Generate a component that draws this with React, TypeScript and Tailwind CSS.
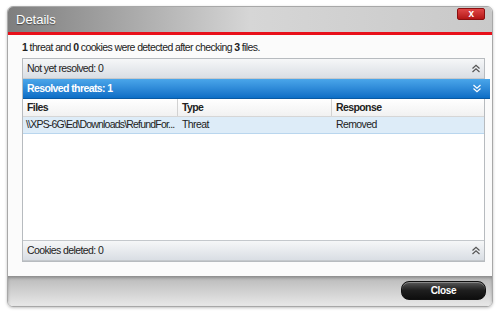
import React from 'react';

function Chevrons({ down = false, color = '#555' }: { down?: boolean; color?: string }) {
  return (
    <svg width="10" height="9" viewBox="0 0 10 9" className={down ? 'rotate-180' : ''}>
      <path d="M1.5 4.5 L5 1.2 L8.5 4.5" fill="none" stroke={color} strokeWidth="1.2" />
      <path d="M1.5 8 L5 4.7 L8.5 8" fill="none" stroke={color} strokeWidth="1.2" />
    </svg>
  );
}

function GrayHeader({ label }: { label: string }) {
  return (
    <div className="h-[20px] flex items-center justify-between pl-[4px] pr-[3px] bg-gradient-to-b from-[#f6f7f8] to-[#d9dee4] border-b border-[#c4c8cc] text-[#222]">
      <span>{label}</span>
      <Chevrons />
    </div>
  );
}

export default function App() {
  return (
    <div className="w-[500px] h-[314px] bg-white pt-[6px] pl-[7px] text-[10.5px] tracking-[-0.6px]" style={{ fontFamily: '"Liberation Sans", Arial, sans-serif' }}>
      <div className="w-[486px] h-[301px] rounded-[6px] border border-[#a8a8a8] overflow-hidden flex flex-col shadow-[0_1px_3px_rgba(0,0,0,0.25)]">
        {/* Title bar */}
        <div className="h-[25px] flex justify-between bg-gradient-to-r from-[#7e7e7e] via-[#d6d6d6] to-[#c9c9c9]">
          <div className="pl-[8px] pt-[4px] text-[13px] tracking-normal leading-[17px] text-white [text-shadow:0_1px_1px_rgba(0,0,0,0.45)]">Details</div>
          <div className="mt-[1px] mr-[7px] w-[28px] h-[12px] rounded-[2px] border border-[#8a1010] bg-gradient-to-b from-[#e04545] to-[#b31414] flex items-center justify-center">
            <span className="text-white text-[10px] font-bold leading-none">x</span>
          </div>
        </div>
        <div className="h-[3px] bg-[#e8101a]" />

        {/* Body */}
        <div className="flex-1 bg-[#fbfbfb] pt-[5px] pl-[14px] pr-[7px] pb-[14px] flex flex-col">
          <div className="h-[14px] leading-[14px] text-[#222]">
            <b>1</b> threat and <b>0</b> cookies were detected after checking <b>3</b> files.
          </div>
          <div className="mt-[4px] flex-1 border border-[#b7bbbf] flex flex-col bg-white">
            <GrayHeader label="Not yet resolved: 0" />
            <div className="h-[20px] mr-[-6px] flex items-center justify-between pl-[4px] pr-[8px] bg-gradient-to-b from-[#4aa6ea] to-[#0b6ec6] border-b border-[#0a5aa3] font-bold text-white">
              <span>Resolved threats: 1</span>
              <Chevrons down color="#ffffff" />
            </div>
            <div className="h-[18px] grid grid-cols-[155px_154px_1fr] bg-gradient-to-b from-white to-[#f1f1f1] border-b border-[#d6d6d6] font-bold text-[#222]">
              <div className="pl-[4px] flex items-center border-r border-[#d2d2d2]">Files</div>
              <div className="pl-[4px] flex items-center border-r border-[#d2d2d2]">Type</div>
              <div className="pl-[4px] flex items-center">Response</div>
            </div>
            <div className="h-[17px] grid grid-cols-[155px_154px_1fr] bg-[#ddecf8] border-b border-[#b9d6ee] text-[#222]">
              <div className="pl-[3px] flex items-center whitespace-nowrap overflow-hidden tracking-[-0.8px]">\\XPS-6G\Ed\Downloads\RefundFor...</div>
              <div className="pl-[4px] flex items-center">Threat</div>
              <div className="pl-[4px] flex items-center">Removed</div>
            </div>
            <div className="flex-1 bg-white" />
            <div className="border-t border-[#c4c8cc]">
              <GrayHeader label="Cookies deleted: 0" />
            </div>
          </div>
        </div>

        {/* Footer */}
        <div className="h-[30px] flex justify-end items-start pt-[5px] pr-[6px] bg-gradient-to-b from-[#b9b9b9] to-[#e8e8e8] shadow-[inset_0_2px_3px_rgba(0,0,0,0.25)]">
          <div className="w-[85px] h-[19px] rounded-[8px] border border-[#111] bg-gradient-to-b from-[#5a5a5a] via-[#1e1e1e] to-[#0e0e0e] flex items-center justify-center text-white text-[10px] tracking-[-0.3px] font-bold shadow-[inset_0_1px_0_rgba(255,255,255,0.3)]">
            Close
          </div>
        </div>
      </div>
    </div>
  );
}
